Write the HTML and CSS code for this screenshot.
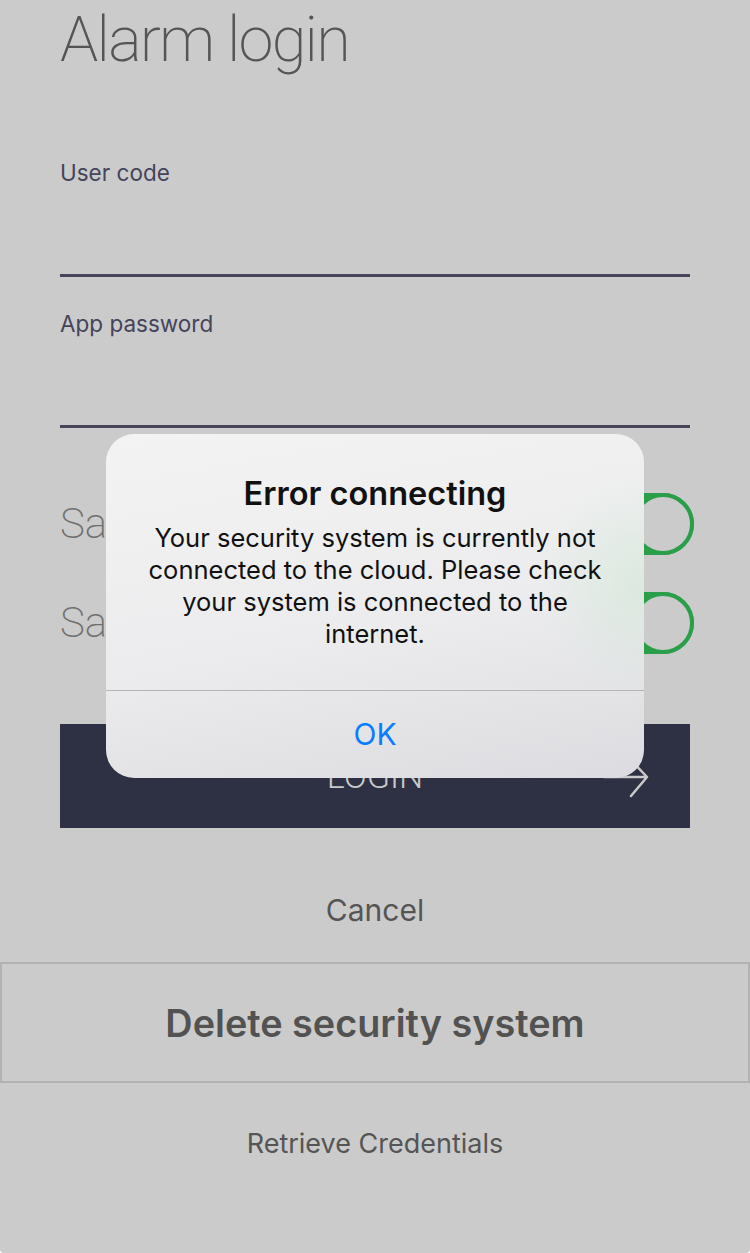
FILE: index.html
```html
<!DOCTYPE html>
<html lang="en">
<head>
  <meta charset="utf-8">
  <title>Alarm login</title>
  <link rel="stylesheet" href="styles.css">
</head>
<body>
  <div class="login">
    <div class="login__form">
      <h1 class="login__title">Alarm login</h1>

      <label class="login__field">
        <span class="login__label">User code</span>
        <span class="login__input"></span>
      </label>
      <label class="login__field">
        <span class="login__label">App password</span>
        <span class="login__input"></span>
      </label>

      <div class="login__option">
        <span class="login__option-text">Save user code</span>
        <span class="switch"><span class="switch__knob"></span></span>
      </div>
      <div class="login__option">
        <span class="login__option-text">Save password</span>
        <span class="switch"><span class="switch__knob"></span></span>
      </div>

      <button class="login__submit">
        <span>LOGIN</span>
        <svg class="login__arrow" width="48" height="44" viewBox="0 0 48 44">
          <path d="M2 22 H44 M27 3 L45 22 L29 41" fill="none" stroke="#c9c9c9" stroke-width="2.5" stroke-linecap="round" stroke-linejoin="round"/>
        </svg>
      </button>

      <div class="login__link login__link--cancel">Cancel</div>
    </div>

    <div class="login__delete">Delete security system</div>
    <div class="login__link login__link--retrieve">Retrieve Credentials</div>
  </div>

  <div class="alert">
    <div class="alert__body">
      <div class="alert__title">Error connecting</div>
      <div class="alert__message">Your security system is currently not connected to the cloud. Please check your system is connected to the internet.</div>
    </div>
    <div class="alert__action">OK</div>
  </div>
</body>
</html>
```

FILE: styles.css
```css
* {
  box-sizing: border-box;
}

body {
  margin: 0;
  background: #ffffff;
  font-family: Inter, Roboto, "Liberation Sans", sans-serif;
}

.login {
  width: 750px;
  height: 1253px;
  background: #cbcbcb;
  border-radius: 0 0 4px 4px;
  overflow: hidden;
}

.login__form {
  padding: 0 60px;
}

.login__title {
  margin: 0;
  padding-top: 2px;
  height: 150px;
  font-family: Roboto, sans-serif;
  font-weight: 200;
  font-size: 63px;
  line-height: 76px;
  color: #555555;
  letter-spacing: -1.8px;
}

.login__field {
  display: block;
}

.login__label {
  display: block;
  font-size: 22.5px;
  line-height: 46px;
  color: #45445a;
}

.login__input {
  display: block;
  height: 81px;
  border-bottom: 3px solid #46455a;
}

.login__field + .login__field {
  margin-top: 24px;
}

.login__option {
  display: flex;
  align-items: center;
  justify-content: space-between;
  height: 99px;
  margin-right: -4px;
}

.login__option:first-of-type {
  margin-top: 46px;
}

.login__option-text {
  font-family: Roboto, sans-serif;
  font-weight: 200;
  font-size: 42px;
  color: #707070;
}

.switch {
  position: relative;
  width: 102px;
  height: 62px;
  border-radius: 31px;
  background: #2b9e49;
}

.switch__knob {
  position: absolute;
  right: 0;
  top: 0;
  width: 62px;
  height: 62px;
  border-radius: 50%;
  background: #cbcbcb;
  border: 4px solid #2b9e49;
}

.login__submit {
  position: relative;
  display: flex;
  align-items: center;
  justify-content: center;
  width: 100%;
  height: 104px;
  margin-top: 52px;
  border: 0;
  background: #2e3043;
  color: #c9c9c9;
  font-family: Roboto, sans-serif;
  font-weight: 300;
  font-size: 34px;
  padding: 0;
}

.login__arrow {
  position: absolute;
  right: 40px;
  top: 31px;
}

.login__link {
  text-align: center;
  color: #555555;
}

.login__link--cancel {
  font-size: 30px;
  line-height: 36px;
  padding: 64px 0 34px;
}

.login__delete {
  height: 121px;
  border: 2px solid #b2b2b2;
  display: flex;
  align-items: center;
  justify-content: center;
  font-size: 37.8px;
  font-weight: 600;
  color: #525252;
}

.login__link--retrieve {
  font-size: 27px;
  line-height: 32px;
  padding-top: 45px;
}

.alert {
  position: absolute;
  left: 106px;
  top: 434px;
  width: 538px;
  height: 344px;
  border-radius: 28px;
  overflow: hidden;
  background: linear-gradient(170deg, #f3f3f3 0%, #ececee 55%, #dcdce0 100%);
  display: flex;
  flex-direction: column;
  color: #111111;
}

.alert::after {
  content: "";
  position: absolute;
  right: 0;
  top: 40px;
  width: 110px;
  height: 220px;
  background: radial-gradient(ellipse at right, rgba(200, 230, 205, 0.45), rgba(200, 230, 205, 0) 70%);
}

.alert__body,
.alert__action {
  position: relative;
  z-index: 1;
}

.alert__body {
  height: 257px;
  padding: 40px 38px 0;
  text-align: center;
  border-bottom: 1px solid #b5b5b8;
}

.alert__title {
  font-size: 32.5px;
  font-weight: 600;
  line-height: 40px;
  margin-bottom: 8px;
}

.alert__message {
  font-size: 25.5px;
  line-height: 32px;
}

.alert__action {
  flex: 1;
  display: flex;
  align-items: center;
  justify-content: center;
  font-size: 30px;
  color: #0a7dff;
  padding-bottom: 1px;
}
```
